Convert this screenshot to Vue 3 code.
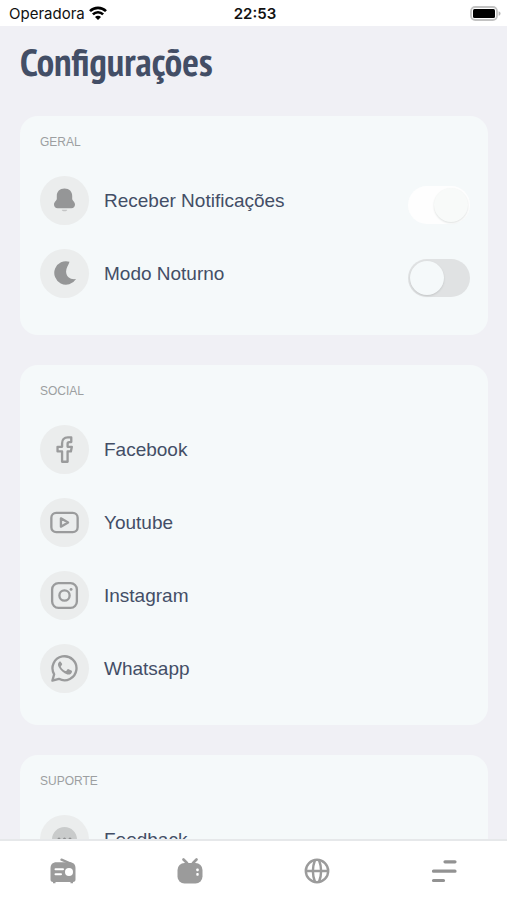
<script setup>
import { ref } from 'vue'

const notifications = ref(true)
const nightMode = ref(false)

const social = [
  { id: 'facebook', label: 'Facebook' },
  { id: 'youtube', label: 'Youtube' },
  { id: 'instagram', label: 'Instagram' },
  { id: 'whatsapp', label: 'Whatsapp' }
]
</script>

<template>
  <div class="screen">
    <header class="status">
      <div class="carrier">
        <span>Operadora</span>
        <svg class="wifi" viewBox="0 0 18 14" aria-hidden="true">
          <path d="M1 5.200a11.300 11.300 0 0 1 16 0M3.900 8.300a7.200 7.200 0 0 1 10.200 0" fill="none" stroke="#000" stroke-width="2.600" />
          <path d="M9 14 6 10.900a4.200 4.200 0 0 1 6 0Z" fill="#000" />
        </svg>
      </div>
      <time class="clock">22:53</time>
      <svg class="battery" viewBox="0 0 31 15" aria-hidden="true">
        <rect x="1" y="1" width="26" height="13" rx="4.200" fill="#fff" stroke="#c2c2c2" stroke-width="1.800" />
        <rect x="3" y="3" width="22" height="9" rx="1.500" fill="#000" />
        <path d="M28.600 5.200c2.600.8 2.600 3.800 0 4.600Z" fill="#b5b5b5" />
      </svg>
    </header>

    <main class="content">
      <h1>Configurações</h1>

      <section class="card general">
        <h2>GERAL</h2>
        <ul>
          <li class="row">
            <span class="badge">
              <svg viewBox="0 0 25 25" aria-hidden="true">
                <path d="M12.500 .5c-4.800 0-7.700 3.200-7.700 7.400v3c0 1.500-2.800 2.600-2.800 5.600 0 2.300 1.500 3.700 3.700 3.700h13.600c2.200 0 3.700-1.400 3.700-3.700 0-3-2.800-4.100-2.800-5.600v-3c0-4.200-2.900-7.400-7.700-7.400Z" fill="#959697" />
                <path d="M9.700 21.700h5.600c-.5 2-5.100 2-5.600 0Z" fill="#c4c5c6" />
              </svg>
            </span>
            <label class="name" for="notifications">Receber Notificações</label>
            <input id="notifications" v-model="notifications" class="switch" type="checkbox" role="switch" />
          </li>
          <li class="row">
            <span class="badge">
              <svg viewBox="0 0 25 25" aria-hidden="true">
                <path d="M17.500 .8A11.700 11.700 0 1 0 24 18C18.500 18.800 14.400 16 14.100 11 13.900 7 16.500 4.500 17.500 .8Z" fill="#959697" />
              </svg>
            </span>
            <label class="name" for="night">Modo Noturno</label>
            <input id="night" v-model="nightMode" class="switch" type="checkbox" role="switch" />
          </li>
        </ul>
      </section>

      <section class="card">
        <h2>SOCIAL</h2>
        <ul>
          <li v-for="item in social" :key="item.id">
            <a class="row" href="#">
              <span class="badge">
                <svg v-if="item.id === 'facebook'" class="line large" viewBox="0 0 30 30" aria-hidden="true">
                  <path d="M22 2.500h-3.500c-4 0-6 2.400-6 6v3.700H7.800V17h4.700v10.700h5.700V17h3.400l1-4.800h-4.400V9c0-1 .5-1.700 1.600-1.700H22Z" />
                </svg>
                <svg v-else-if="item.id === 'youtube'" class="line large" viewBox="0 0 30 30" aria-hidden="true">
                  <rect x="1.400" y="5" width="27.200" height="20" rx="5" />
                  <path d="m11.300 10.700 7.400 4.300-7.400 4.300Z" />
                </svg>
                <svg v-else-if="item.id === 'instagram'" class="line large" viewBox="0 0 30 30" aria-hidden="true">
                  <rect x="2.200" y="2.200" width="25.600" height="25.600" rx="6.500" />
                  <circle cx="15" cy="15" r="5.300" />
                  <circle class="dot" cx="21.800" cy="8.700" r="1.500" />
                </svg>
                <svg v-else class="line large" viewBox="0 0 30 30" aria-hidden="true">
                  <path d="M2.500 27.500 4.300 21A12.400 12.400 0 1 1 9.200 25.700Z" />
                  <path class="dot" d="M11.200 8.300c-.5-.7-1.200-.6-1.800 0-1.400 1.300-1.500 3.200-.4 5.200 2 3.800 5 6.400 9 7.600 2 .6 4.300-.6 4.700-2.600.2-.8 0-1.100-.6-1.400l-2.900-1.400c-.5-.2-.8-.1-1.200.3l-1 1.300c-.3.4-.7.4-1.200.2-2-.9-3.600-2.400-4.500-4.100-.2-.4-.1-.7.2-1l.9-1.200c.2-.3.3-.6.100-1Z" />
                </svg>
              </span>
              <span class="name">{{ item.label }}</span>
            </a>
          </li>
        </ul>
      </section>

      <section class="card">
        <h2>SUPORTE</h2>
        <ul>
          <li>
            <a class="row" href="#">
              <span class="badge">
                <svg viewBox="0 0 25 25" aria-hidden="true">
                  <circle cx="12.500" cy="12.500" r="12.500" fill="#c9cbcb" />
                  <circle cx="7" cy="12" r="1.500" fill="#8f9091" />
                  <circle cx="12.500" cy="12" r="1.500" fill="#8f9091" />
                  <circle cx="18" cy="12" r="1.500" fill="#8f9091" />
                </svg>
              </span>
              <span class="name">Feedback</span>
            </a>
          </li>
        </ul>
      </section>
    </main>

    <nav class="tabs">
      <a href="#" aria-label="Rádio">
        <svg viewBox="0 0 26 26" aria-hidden="true">
          <path d="M11.500 1.700 20.500 5.500" fill="none" stroke="#9b9b9b" stroke-width="2.400" stroke-linecap="round" />
          <path d="M6.500 4.200h13c4 0 6 2.200 6 6v11.300c0 1.600-.8 2.500-2.500 2.500v1.300h-2.500V24h-15v1.300H3V24c-1.700 0-2.500-.9-2.500-2.500V10.200c0-3.800 2-6 6-6Z" fill="#9b9b9b" />
          <circle cx="19" cy="14" r="4" fill="#fff" />
          <path d="M5.500 11.300H13M5.500 16.300H11" stroke="#fff" stroke-width="2" stroke-linecap="round" />
        </svg>
      </a>
      <a href="#" aria-label="TV">
        <svg viewBox="0 0 26 26" aria-hidden="true">
          <path d="M6.500 1.500 10 5M19.500 1.500 16 5" stroke="#9b9b9b" stroke-width="2.600" stroke-linecap="round" />
          <rect x=".5" y="5" width="25" height="20.500" rx="7" fill="#9b9b9b" />
          <rect x="19.300" y="10.500" width="2.400" height="2.800" rx=".8" fill="#fff" />
          <rect x="19.300" y="15" width="2.400" height="2.800" rx=".8" fill="#fff" />
        </svg>
      </a>
      <a href="#" aria-label="Site">
        <svg viewBox="0 0 26 26" aria-hidden="true">
          <g fill="none" stroke="#9b9b9b" stroke-width="2.400">
            <circle cx="13" cy="13" r="11.200" />
            <path d="M1.800 13h22.400M11 2C8.300 9 8.300 17 11 24M15 2c2.700 7 2.700 15 0 22" />
          </g>
        </svg>
      </a>
      <a href="#" aria-label="Configurações" aria-current="page">
        <svg viewBox="0 0 26 26" aria-hidden="true">
          <path d="M14 3.800h10M2.500 13.200H24M2.500 22.500h10" stroke="#929292" stroke-width="3.200" stroke-linecap="round" />
        </svg>
      </a>
    </nav>
  </div>
</template>

<style>
body {
  margin: 0;
  background: #f0f0f5;
}
</style>

<style scoped>
.screen {
  display: flex;
  flex-direction: column;
  height: 100vh;
  background: #f0f0f5;
  color: #434e66;
  font-family: "Liberation Sans", Arial, sans-serif;
}

.status {
  display: grid;
  grid-template-columns: 1fr auto 1fr;
  align-items: center;
  height: 26px;
  padding: 0 6px 0 9px;
  background: #fff;
  color: #111;
  font-family: Inter, sans-serif;
  font-size: 15px;
}

.carrier {
  display: flex;
  align-items: center;
  gap: 4px;
}

.wifi {
  width: 18px;
  height: 14px;
}

.clock {
  font-weight: 600;
}

.battery {
  justify-self: end;
  width: 31px;
  height: 15px;
}

.content {
  flex: 1;
  min-height: 0;
  padding: 12px 19px 30px 20px;
  overflow-y: auto;
  scrollbar-width: none;
}

h1 {
  margin: 0 0 30px;
  font-family: "PT Sans Narrow", "Liberation Sans Narrow", "Open Sans Condensed", "Liberation Sans", sans-serif;
  font-size: 39px;
  font-weight: 700;
  line-height: 48px;
}

.card {
  margin-bottom: 30px;
  padding: 16px 18px 32px 20px;
  border-radius: 18px;
  background: #f5f9fa;
}

.general {
  padding-bottom: 37px;
}

h2 {
  margin: 0 0 24px;
  color: #9c9fa1;
  font-size: 12px;
  font-weight: 400;
  line-height: 20px;
}

ul {
  display: grid;
  gap: 24px;
  margin: 0;
  padding: 0;
  list-style: none;
}

.row {
  display: flex;
  align-items: center;
  gap: 15px;
  color: inherit;
  text-decoration: none;
}

.badge {
  display: grid;
  flex: none;
  place-items: center;
  width: 49px;
  height: 49px;
  border-radius: 50%;
  background: #ebeded;
}

.badge svg {
  width: 25px;
  height: 25px;
}

.badge .large {
  width: 29px;
  height: 29px;
}

.line {
  fill: none;
  stroke: #9a9b9c;
  stroke-width: 2.4;
  stroke-linejoin: round;
}

.dot {
  fill: #9a9b9c;
  stroke: none;
}

.name {
  flex: 1;
  font-size: 19px;
  line-height: 24px;
}

.switch {
  display: flex;
  align-self: flex-end;
  width: 62px;
  height: 38px;
  margin: 0 0 1px;
  padding: 2px;
  box-sizing: border-box;
  border-radius: 19px;
  background: #e0e2e3;
  appearance: none;
}

.switch::before {
  width: 34px;
  height: 34px;
  border-radius: 50%;
  background: #f5f9fa;
  box-shadow: 0 1px 2px #c3c6c7;
  content: "";
}

.switch:checked {
  justify-content: flex-end;
  background: #fefefe;
}

.switch:checked::before {
  background: #f8faf9;
  box-shadow: 0 1px 2px #dfe2e1;
}

.tabs {
  display: grid;
  grid-template-columns: repeat(4, 1fr);
  height: 59px;
  border-top: 2px solid #e6e8ea;
  background: #fff;
}

.tabs a {
  display: grid;
  place-items: center;
}

.tabs svg {
  width: 26px;
  height: 26px;
}
</style>
